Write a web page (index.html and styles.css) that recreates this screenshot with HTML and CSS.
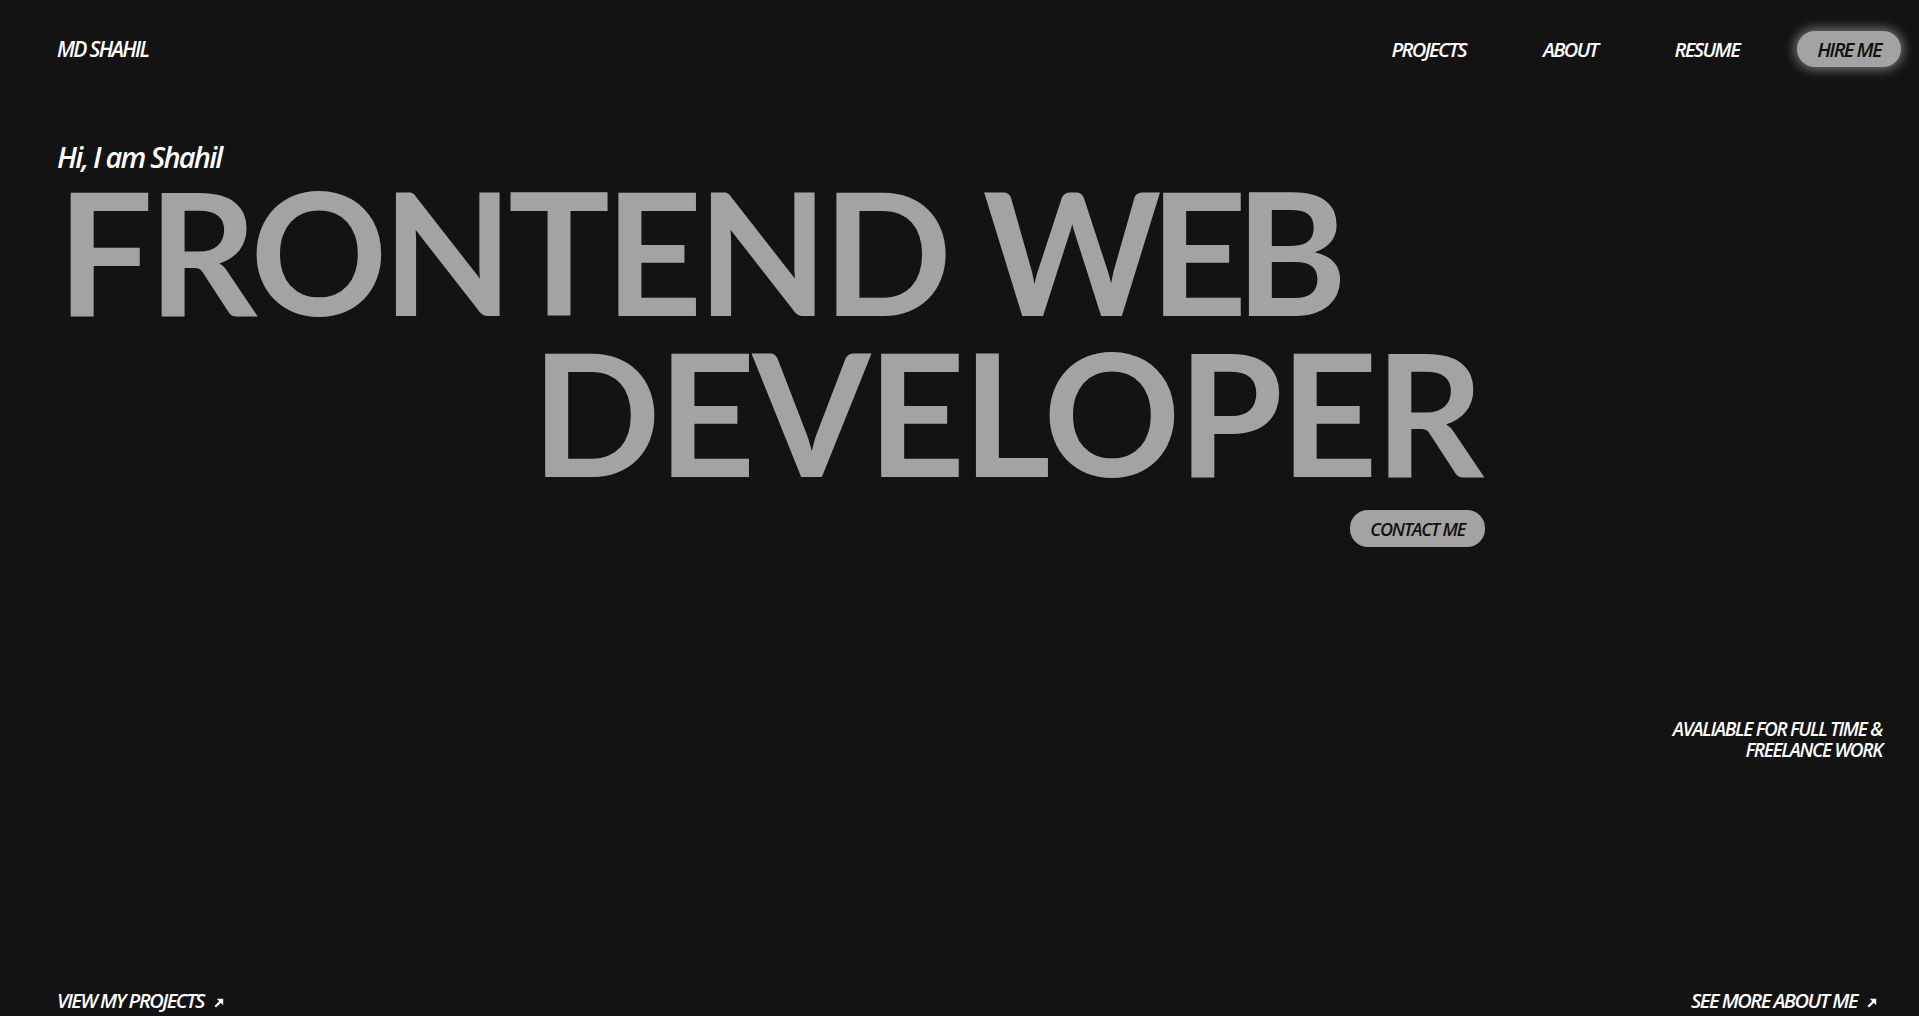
FILE: index.html
```html
<!DOCTYPE html>
<html lang="en">
<head>
<meta charset="utf-8">
<title>MD Shahil</title>
<link rel="stylesheet" href="styles.css">
</head>
<body>
<div class="page">
  <header class="header">
    <a class="brand" href="#">MD SHAHIL</a>
    <nav class="nav">
      <a class="nav-link" href="#">PROJECTS</a>
      <a class="nav-link" href="#">ABOUT</a>
      <a class="nav-link" href="#">RESUME</a>
      <a class="hire" href="#">HIRE ME</a>
    </nav>
  </header>

  <main class="hero">
    <p class="greeting">Hi, I am Shahil</p>
    <div class="title-block">
      <h1 class="title">
        <span class="title-line">FRONTEND <span class="tight">WEB</span></span>
        <span class="title-line title-line-right">DEVELOPER</span>
      </h1>
      <div class="contact-row">
        <a class="contact" href="#">CONTACT ME</a>
      </div>
    </div>
    <p class="available">AVALIABLE FOR FULL TIME &amp;<br>FREELANCE WORK</p>
  </main>

  <footer class="footer">
    <a class="foot-link" href="#">VIEW MY PROJECTS
      <svg class="arrow" viewBox="0 0 10 10" width="10" height="10"><path d="M1.3 8.7 L6.8 3.2" stroke="#fff" stroke-width="2.2" fill="none"/><polygon points="2.8,0.8 9.2,0.8 9.2,7.2" fill="#fff"/></svg>
    </a>
    <a class="foot-link" href="#">SEE MORE ABOUT ME
      <svg class="arrow" viewBox="0 0 10 10" width="10" height="10"><path d="M1.3 8.7 L6.8 3.2" stroke="#fff" stroke-width="2.2" fill="none"/><polygon points="2.8,0.8 9.2,0.8 9.2,7.2" fill="#fff"/></svg>
    </a>
  </footer>
</div>
</body>
</html>
```

FILE: styles.css
```css
html, body {
  margin: 0;
  padding: 0;
  background: #131313;
}

body {
  font-family: "Open Sans", "Liberation Sans", sans-serif;
  font-weight: 600;
  color: #ffffff;
}

a {
  color: inherit;
  text-decoration: none;
}

.page {
  min-height: 100vh;
  display: flex;
  flex-direction: column;
  box-sizing: border-box;
  padding-bottom: 3px;
}

.header {
  display: flex;
  justify-content: space-between;
  align-items: center;
  padding: 31px 18px 0 57px;
}

.brand {
  font-size: 21px;
  font-style: italic;
  letter-spacing: -1.7px;
}

.nav {
  display: flex;
  align-items: center;
  gap: 77px;
}

.nav-link {
  font-size: 20px;
  font-style: italic;
  letter-spacing: -1.6px;
}

.hire {
  margin-left: -19px;
  height: 36px;
  padding: 0 20px;
  display: flex;
  align-items: center;
  border-radius: 18px;
  background: #a3a3a3;
  color: #111;
  font-size: 20px;
  font-style: italic;
  letter-spacing: -1.6px;
  box-shadow: 0 0 12px 2px rgba(255, 255, 255, 0.45);
}

.hero {
  flex: 1;
  display: flex;
  flex-direction: column;
  padding: 0 37px 0 57px;
}

.greeting {
  margin: 72px 0 0;
  font-size: 29px;
  line-height: 36px;
  font-style: italic;
  letter-spacing: -1.8px;
}

.title-block {
  width: 1428px;
  display: flex;
  flex-direction: column;
}

.title {
  margin: -5px 0 0;
  display: flex;
  flex-direction: column;
  font-family: "Lato", "Liberation Sans", sans-serif;
  font-weight: 700;
  font-size: 170px;
  line-height: 161px;
  letter-spacing: -5.3px;
  color: #a3a3a3;
}

.title-line {
  display: block;
}

.tight {
  letter-spacing: -12px;
}

.title-line-right {
  text-align: right;
  letter-spacing: -3px;
  padding-right: 4px;
}

.contact-row {
  display: flex;
  justify-content: flex-end;
  margin-top: 18px;
}

.contact {
  height: 37px;
  padding: 0 20px;
  display: flex;
  align-items: center;
  border-radius: 18px;
  background: #a3a3a3;
  color: #111;
  font-size: 18px;
  font-style: italic;
  letter-spacing: -1.2px;
}

.available {
  align-self: flex-end;
  margin: 172px 0 0;
  text-align: right;
  font-size: 19px;
  line-height: 21px;
  font-style: italic;
  letter-spacing: -1.3px;
}

.footer {
  display: flex;
  justify-content: space-between;
  align-items: baseline;
  padding: 0 42px 0 57px;
}

.foot-link {
  display: flex;
  align-items: center;
  gap: 10px;
  font-size: 20px;
  line-height: 24px;
  font-style: italic;
  letter-spacing: -1.5px;
}

.arrow {
  width: 10px;
  height: 10px;
  margin-top: 4px;
}
```
